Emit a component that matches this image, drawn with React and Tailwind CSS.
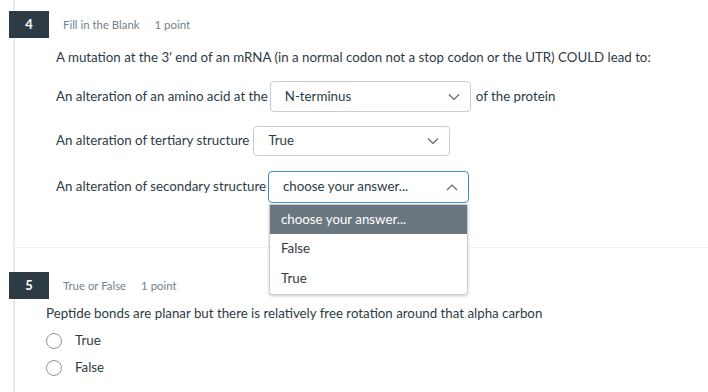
import React from "react";

function Chevron({ up }) {
  return (
    <svg width="12" height="8" viewBox="0 0 12 8" fill="none" className="shrink-0">
      {up ? (
        <path d="M1 7L6 2L11 7" stroke="#5a6770" strokeWidth="1.2" />
      ) : (
        <path d="M1 1.5L6 6.5L11 1.5" stroke="#5a6770" strokeWidth="1.2" />
      )}
    </svg>
  );
}

function Select({ value, w, h, focus, up }) {
  return (
    <div
      className={
        "flex items-center justify-between pl-[14px] pr-[10px] rounded-[4px] bg-white " +
        (focus ? "border-[1.5px] border-[#3c8fd0]" : "border border-[#c7cdd1]")
      }
      style={{ width: w, height: h }}
    >
      <span className="text-[13.3px] text-[#2d3b45]">{value}</span>
      <Chevron up={up} />
    </div>
  );
}

function Radio({ label }) {
  return (
    <div className="flex items-center h-[20px]">
      <div className="w-[16px] h-[16px] rounded-full border border-[#8b969e] bg-white" />
      <span className="ml-[13px] text-[13.3px] text-[#2d3b45]">{label}</span>
    </div>
  );
}

export default function App() {
  return (
    <div
      className="w-[708px] h-[392px] bg-white overflow-hidden text-[#2d3b45]"
      style={{ fontFamily: "Lato, 'Open Sans', sans-serif" }}
    >
      <div className="ml-[13px] h-full border-l-2 border-[#e8eaec] pt-[11px]">
        {/* Question 4 */}
        <div className="flex items-center -ml-[6px]">
          <div className="w-[40px] h-[27px] bg-[#2d3b45] text-white text-[13px] font-bold flex items-center justify-center">
            4
          </div>
          <span className="ml-[14px] text-[11.4px] text-[#73818c]">Fill in the Blank</span>
          <span className="ml-[15px] text-[11.4px] text-[#73818c]">1 point</span>
        </div>
        <div className="pl-[41px]">
          <div className="mt-[9px] h-[20px] leading-[20px] text-[13.3px]">
            A mutation at the 3' end of an mRNA (in a normal codon not a stop codon or the UTR) COULD lead to:
          </div>
          <div className="mt-[14px] flex items-center text-[13.3px]">
            <span>An alteration of an amino acid at the</span>
            <div className="ml-[2px]">
              <Select value="N-terminus" w={201} h={31} />
            </div>
            <span className="ml-[5px]">of the protein</span>
          </div>
          <div className="mt-[14px] flex items-center text-[13.3px]">
            <span>An alteration of tertiary structure</span>
            <div className="ml-[4px]">
              <Select value="True" w={197} h={30} />
            </div>
          </div>
          <div className="mt-[15px] flex items-center text-[13.3px]">
            <span>An alteration of secondary structure</span>
            <div className="ml-[2px] relative">
              <Select value="choose your answer..." w={201} h={32} focus up />
              <div className="absolute left-[1px] top-[33px] w-[199px] bg-white border border-[#c7cdd1] rounded-b-[3px] shadow-[0_1px_3px_rgba(0,0,0,0.2)] z-10">
                <div className="h-[29px] bg-[#6b7780] text-white flex items-center pl-[11px] text-[13.3px]">
                  choose your answer...
                </div>
                <div className="h-[30px] flex items-center pl-[11px] text-[13.3px] text-[#2d3b45]">False</div>
                <div className="h-[30px] flex items-center pl-[11px] text-[13.3px] text-[#2d3b45]">True</div>
              </div>
            </div>
          </div>
        </div>
        <div className="mt-[44px] border-t border-[#f0f1f2]" />

        {/* Question 5 */}
        <div className="mt-[24px] flex items-center -ml-[6px]">
          <div className="w-[40px] h-[27px] bg-[#2d3b45] text-white text-[13px] font-bold flex items-center justify-center">
            5
          </div>
          <span className="ml-[14px] text-[11.4px] text-[#73818c]">True or False</span>
          <span className="ml-[15px] text-[11.4px] text-[#73818c]">1 point</span>
        </div>
        <div className="pl-[31px]">
          <div className="mt-[4px] h-[20px] leading-[20px] text-[13.3px]">
            Peptide bonds are planar but there is relatively free rotation around that alpha carbon
          </div>
          <div className="mt-[8px]">
            <Radio label="True" />
          </div>
          <div className="mt-[7px]">
            <Radio label="False" />
          </div>
        </div>
      </div>
    </div>
  );
}
